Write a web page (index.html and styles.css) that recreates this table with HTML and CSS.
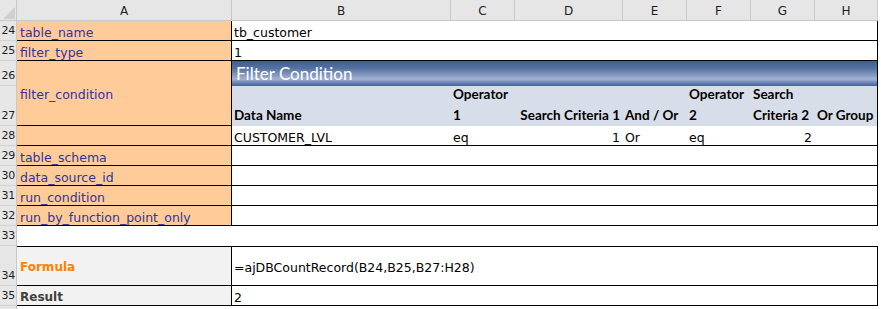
FILE: index.html
```html
<!DOCTYPE html>
<html>
<head>
<meta charset="utf-8">
<title>ajDBCountRecord</title>
<link rel="stylesheet" href="styles.css">
</head>
<body>
<div class="sheet">
  <!-- column headers -->
  <div class="corner"><svg width="17" height="21" viewBox="0 0 17 21"><polygon points="15,7 15,19 3,19" fill="#cfcfcf"/></svg></div>
  <div class="colhead">A</div>
  <div class="colhead">B</div>
  <div class="colhead">C</div>
  <div class="colhead">D</div>
  <div class="colhead">E</div>
  <div class="colhead">F</div>
  <div class="colhead">G</div>
  <div class="colhead">H</div>
  <div class="pad"></div>

  <!-- 24 -->
  <div class="rowhead">24</div>
  <div class="cell label">table_name</div>
  <div class="cell value wide">tb_customer</div>
  <div class="pad"></div>

  <!-- 25 -->
  <div class="rowhead">25</div>
  <div class="cell label">filter_type</div>
  <div class="cell value wide">1</div>
  <div class="pad"></div>

  <!-- 26 / 27 -->
  <div class="rowhead">26</div>
  <div class="cell label tall middle">filter_condition</div>
  <div class="cell title wide">Filter Condition</div>
  <div class="pad"></div>

  <div class="rowhead">27</div>
  <div class="cell sub">Data Name</div>
  <div class="cell sub">Operator<br>1</div>
  <div class="cell sub right">Search Criteria 1</div>
  <div class="cell sub">And / Or</div>
  <div class="cell sub">Operator<br>2</div>
  <div class="cell sub">Search<br>Criteria 2</div>
  <div class="cell sub last">Or Group</div>
  <div class="pad"></div>

  <!-- 28 -->
  <div class="rowhead">28</div>
  <div class="cell label"></div>
  <div class="cell data">CUSTOMER_LVL</div>
  <div class="cell data">eq</div>
  <div class="cell data right">1</div>
  <div class="cell data">Or</div>
  <div class="cell data">eq</div>
  <div class="cell data right">2</div>
  <div class="cell data last"></div>
  <div class="pad"></div>

  <!-- 29 - 32 -->
  <div class="rowhead">29</div>
  <div class="cell label">table_schema</div>
  <div class="cell value wide"></div>
  <div class="pad"></div>

  <div class="rowhead">30</div>
  <div class="cell label">data_source_id</div>
  <div class="cell value wide"></div>
  <div class="pad"></div>

  <div class="rowhead">31</div>
  <div class="cell label">run_condition</div>
  <div class="cell value wide"></div>
  <div class="pad"></div>

  <div class="rowhead">32</div>
  <div class="cell label">run_by_function_point_only</div>
  <div class="cell value wide"></div>
  <div class="pad"></div>

  <!-- 33 -->
  <div class="rowhead">33</div>
  <div class="cell blank"></div>
  <div class="pad"></div>

  <!-- 34 / 35 -->
  <div class="rowhead">34</div>
  <div class="cell result middle formula-label">Formula</div>
  <div class="cell value wide middle top-line">=ajDBCountRecord(B24,B25,B27:H28)</div>
  <div class="pad"></div>

  <div class="rowhead">35</div>
  <div class="cell result">Result</div>
  <div class="cell value wide">2</div>
  <div class="pad"></div>

  <!-- next row, only its top edge is in view -->
  <div class="rowhead"></div>
  <div class="cell blank"></div>
  <div class="pad"></div>
</div>
</body>
</html>
```

FILE: styles.css
```css
html, body {
  margin: 0;
  padding: 0;
  background: #ffffff;
}

.sheet {
  display: grid;
  grid-template-columns: 17px 215px 219px 64px 108px 64px 64px 64px 63px 1fr;
  grid-template-rows: 21px 20px 20px 25px 40px 20px 20px 20px 20px 20px 20px 40px 20px 20px;
  width: 881px;
  height: 309px;
  overflow: hidden;
  font-family: "DejaVu Sans", Tahoma, sans-serif;
  font-size: 12.5px;
  color: #000;
}

.sheet > div {
  box-sizing: border-box;
  min-width: 0;
  overflow: hidden;
  white-space: nowrap;
}

/* headers */
.corner {
  background: #e6e6e6;
  border-right: 1px solid #c8c8c8;
  border-bottom: 1px solid #c8c8c8;
  line-height: 0;
}

.colhead {
  background: #e6e6e6;
  border-right: 1px solid #c8c8c8;
  border-bottom: 1px solid #c8c8c8;
  display: flex;
  align-items: center;
  justify-content: center;
  font-size: 12px;
  color: #1e1e1e;
  padding-top: 1px;
}

.rowhead {
  background: #e6e6e6;
  border-right: 1px solid #c8c8c8;
  border-bottom: 1px solid #d2d2d2;
  display: flex;
  align-items: flex-end;
  justify-content: flex-end;
  padding: 0 1px 2px 0;
  font-size: 11px;
  letter-spacing: -0.3px;
  color: #1e1e1e;
  line-height: 15px;
}

.pad {
  background: #ffffff;
}

/* cells */
.cell {
  display: flex;
  align-items: flex-end;
  padding: 0 3px 0 3px;
  line-height: 15px;
}

.label {
  background: #ffcc99;
  color: #333399;
  border-right: 1px solid #000;
  border-bottom: 1px solid #000;
}

.tall {
  grid-row: span 2;
}

.middle {
  align-items: center;
  padding-top: 2px;
}

.value {
  background: #ffffff;
  border-bottom: 1px solid #000;
  border-right: 1px solid #000;
  padding-left: 2px;
}

.wide {
  grid-column: span 7;
}

.title {
  background: linear-gradient(#3d5c94 0%, #56739f 30%, #8297bf 55%, #a3b3d1 72%, #6f87b3 86%, #43629a 100%);
  color: #ffffff;
  font-family: Lato, "Liberation Sans", sans-serif;
  font-size: 17px;
  line-height: 20px;
  padding: 0 3px 2px 4px;
  border-right: 1px solid #000;
}

.sub {
  background: #d8dee9;
  font-family: Lato, "Liberation Sans", sans-serif;
  font-weight: 700;
  font-size: 13.5px;
  line-height: 21px;
  padding: 0 3px 0 2px;
}

.data {
  background: #ffffff;
  border-bottom: 1px solid #000;
  padding-left: 2px;
}

.right {
  justify-content: flex-end;
}

.last {
  border-right: 1px solid #000;
}

.blank {
  grid-column: span 8;
  background: #ffffff;
}

.top-line {
  border-top: 1px solid #000;
}

.result {
  background: #f2f2f2;
  color: #404040;
  font-weight: 700;
  border-right: 1px solid #000;
  border-bottom: 1px solid #000;
  font-size: 12px;
}

.formula-label {
  color: #ff8000;
  border-top: 1px solid #000;
}
```
